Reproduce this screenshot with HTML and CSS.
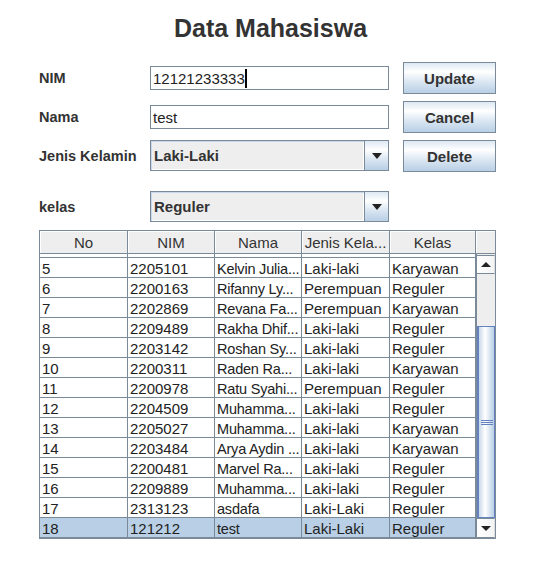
FILE: index.html
```html
<!DOCTYPE html>
<html lang="id">
<head>
    <meta charset="UTF-8">
    <meta name="viewport" content="width=device-width, initial-scale=1.0">
    <title>Data Mahasiswa</title>
    <link rel="stylesheet" href="styles.css">
</head>
<body>
    <h1 class="title">Data Mahasiswa</h1>
    <div class="form">
        <div class="form-row">
            <span class="label">NIM</span>
            <div class="field">12121233333<span class="caret"></span></div>
            <button class="btn">Update</button>
        </div>
        <div class="form-row">
            <span class="label">Nama</span>
            <div class="field">test</div>
            <button class="btn">Cancel</button>
        </div>
        <div class="form-row">
            <span class="label">Jenis Kelamin</span>
            <div class="combo">
                <div class="combo-value">Laki-Laki</div>
                <div class="combo-arrow"></div>
            </div>
            <button class="btn">Delete</button>
        </div>
        <div class="form-row spaced">
            <span class="label">kelas</span>
            <div class="combo">
                <div class="combo-value">Reguler</div>
                <div class="combo-arrow"></div>
            </div>
        </div>
    </div>
    <div class="table">
        <div class="thead">
            <div class="th">No</div>
            <div class="th">NIM</div>
            <div class="th">Nama</div>
            <div class="th">Jenis Kela...</div>
            <div class="th">Kelas</div>
            <div class="th corner"></div>
        </div>
        <div class="tbody">
            <div class="viewport">
                <div class="rows" id="rows"></div>
            </div>
            <div class="vscroll">
                <div class="sb-btn up"></div>
                <div class="sb-track">
                    <div class="sb-thumb"><div class="grip"></div></div>
                </div>
                <div class="sb-btn down"></div>
            </div>
        </div>
    </div>
    <script>
        // row 4 is scrolled almost out of view, only its grid lines show
        const data = [
            ['', '', '', '', ''],
            ['5', '2205101', 'Kelvin Julia...', 'Laki-laki', 'Karyawan'],
            ['6', '2200163', 'Rifanny Ly...', 'Perempuan', 'Reguler'],
            ['7', '2202869', 'Revana Fa...', 'Perempuan', 'Karyawan'],
            ['8', '2209489', 'Rakha Dhif...', 'Laki-laki', 'Reguler'],
            ['9', '2203142', 'Roshan Sy...', 'Laki-laki', 'Reguler'],
            ['10', '2200311', 'Raden Ra...', 'Laki-laki', 'Karyawan'],
            ['11', '2200978', 'Ratu Syahi...', 'Perempuan', 'Reguler'],
            ['12', '2204509', 'Muhamma...', 'Laki-laki', 'Reguler'],
            ['13', '2205027', 'Muhamma...', 'Laki-laki', 'Karyawan'],
            ['14', '2203484', 'Arya Aydin ...', 'Laki-laki', 'Karyawan'],
            ['15', '2200481', 'Marvel Ra...', 'Laki-laki', 'Reguler'],
            ['16', '2209889', 'Muhamma...', 'Laki-laki', 'Reguler'],
            ['17', '2313123', 'asdafa', 'Laki-Laki', 'Reguler'],
            ['18', '121212', 'test', 'Laki-Laki', 'Reguler']
        ];
        const rows = document.getElementById('rows');
        data.forEach((row, i) => {
            const tr = document.createElement('div');
            tr.className = 'tr' + (i === data.length - 1 ? ' selected' : '');
            row.forEach(value => {
                const td = document.createElement('div');
                td.className = 'td';
                td.textContent = value;
                tr.appendChild(td);
            });
            rows.appendChild(tr);
        });
    </script>
</body>
</html>
```

FILE: styles.css
```css
body {
    margin: 0;
    background: #fff;
    font-family: 'Liberation Sans', Arial, sans-serif;
    color: #333;
}
.title {
    margin: 0;
    padding-top: 13px;
    font-size: 25px;
    line-height: 30px;
    text-align: center;
    color: #333;
}
.form {
    display: flex;
    flex-direction: column;
    gap: 7px;
    margin-top: 19px;
    padding-left: 39px;
}
.form-row {
    display: flex;
    align-items: center;
    height: 32px;
}
.form-row.spaced {
    margin-top: 12px;
}
.label {
    width: 111px;
    font-size: 14.5px;
    font-weight: bold;
}
.field {
    display: flex;
    align-items: center;
    width: 239px;
    height: 24px;
    box-sizing: border-box;
    padding-left: 2px;
    border: 1px solid #7a8a99;
    background: #fff;
    font-size: 15px;
    color: #222;
}
.caret {
    display: inline-block;
    width: 2px;
    height: 19px;
    background: #000;
}
.btn {
    width: 93px;
    height: 32px;
    margin-left: 14px;
    padding: 0;
    box-sizing: border-box;
    border: 1px solid #7a8a99;
    background: linear-gradient(#dde8f3 0%, #fff 30%, #dde8f3 60%, #b8cfe5 100%);
    font-family: inherit;
    font-size: 15px;
    font-weight: bold;
    color: #333;
}
.combo {
    display: flex;
    align-self: flex-start;
    width: 239px;
    height: 31px;
    box-sizing: border-box;
    border: 1px solid #7a8a99;
}
.combo-value {
    display: flex;
    align-items: center;
    flex: 1;
    padding-left: 3px;
    background: #eee;
    box-shadow: inset 1px 1px 0 #c8d8ea, inset -1px -1px 0 #fff;
    font-size: 15px;
    font-weight: bold;
    color: #333;
}
.combo-arrow {
    display: flex;
    align-items: center;
    justify-content: center;
    width: 23px;
    border-left: 1px solid #7a8a99;
    background: linear-gradient(#dde8f3 0%, #fff 30%, #dde8f3 60%, #b8cfe5 100%);
}
.combo-arrow::before {
    content: "";
    border-left: 5.5px solid transparent;
    border-right: 5.5px solid transparent;
    border-top: 6px solid #222;
}
.table {
    width: 457px;
    margin: 7px 0 0 39px;
    box-sizing: border-box;
    border: 1px solid #7a8a99;
}
.thead {
    display: grid;
    grid-template-columns: 88px 87px 87px 88px 86px 19px;
    height: 23px;
}
.th {
    box-sizing: border-box;
    border-right: 1px solid #7a8a99;
    border-bottom: 1px solid #7a8a99;
    background: #eee;
    box-shadow: inset 1px 1px 0 #fff;
    font-size: 15px;
    line-height: 24px;
    text-align: center;
    white-space: nowrap;
    overflow: hidden;
}
.th.corner {
    border-right: none;
}
.tbody {
    display: flex;
    height: 284px;
}
.viewport {
    width: 436px;
    overflow: hidden;
}
.rows {
    margin-top: -16px;
}
.tr {
    display: grid;
    grid-template-columns: 88px 87px 87px 88px 86px;
    height: 20px;
}
.tr.selected {
    background: #b8cfe5;
}
.td {
    box-sizing: border-box;
    padding-left: 2px;
    border-right: 1px solid #7a8a99;
    border-bottom: 1px solid #7a8a99;
    font-size: 15px;
    line-height: 21px;
    color: #222;
    white-space: nowrap;
    overflow: hidden;
}
/* names are already cut by the table model, keep them inside the cell */
.td:nth-child(3) {
    font-size: 14.5px;
    line-height: 22px;
    letter-spacing: -0.2px;
}
.vscroll {
    display: flex;
    flex-direction: column;
    width: 19px;
    box-sizing: border-box;
    border-left: 1px solid #7a8a99;
    background: #eee;
}
.sb-btn {
    display: flex;
    align-items: center;
    justify-content: center;
    height: 19px;
    box-sizing: border-box;
    border: 1px solid #7a8a99;
    border-left: none;
    border-right-color: #ddd;
    background: linear-gradient(to right, #fff, #f4f4f4);
}
.sb-btn.up {
    margin-top: 1px;
}
.sb-btn.down {
    height: 20px;
}
.sb-btn.up::before {
    content: "";
    border-left: 5px solid transparent;
    border-right: 5px solid transparent;
    border-bottom: 5px solid #222;
}
.sb-btn.down::before {
    content: "";
    border-left: 5px solid transparent;
    border-right: 5px solid transparent;
    border-top: 5px solid #222;
}
.sb-track {
    display: flex;
    flex-direction: column;
    justify-content: flex-end;
    flex: 1;
}
.sb-thumb {
    display: flex;
    align-items: center;
    justify-content: center;
    height: 192px;
    box-sizing: border-box;
    border: 1px solid #6382bf;
    border-left-width: 2px;
    background: linear-gradient(to right, #c8d8ea, #fff 40%, #b8cfe5);
}
.grip {
    width: 12px;
    height: 5px;
    background: repeating-linear-gradient(#6382bf 0 1px, transparent 1px 2px);
}
```
